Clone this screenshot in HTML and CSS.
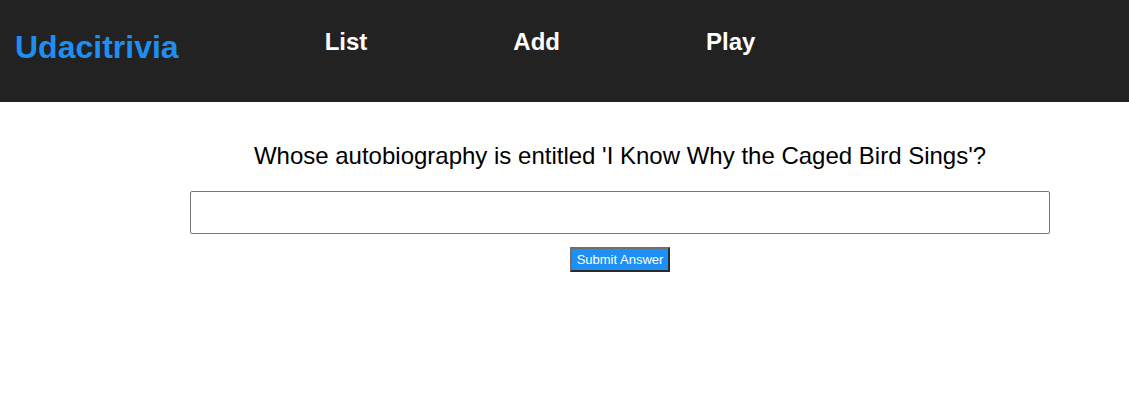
FILE: index.html
```html
<!DOCTYPE html>
<html>
<head>
<meta charset="utf-8">
<link rel="stylesheet" href="styles.css">
</head>
<body>
<header class="app-header">
  <h1 class="logo">Udacitrivia</h1>
  <h2 class="nav-item">List</h2>
  <h2 class="nav-item">Add</h2>
  <h2 class="nav-item">Play</h2>
</header>
<main class="quiz">
  <div class="question">Whose autobiography is entitled 'I Know Why the Caged Bird Sings'?</div>
  <form class="answer-form">
    <input class="answer-input" type="text">
    <input class="submit-btn" type="button" value="Submit Answer">
  </form>
</main>
</body>
</html>
```

FILE: styles.css
```css
html, body {
  margin: 0;
  padding: 0;
  background: #ffffff;
  font-family: "Liberation Sans", Arial, sans-serif;
}

.app-header {
  display: flex;
  align-items: flex-start;
  gap: 146px;
  height: 102px;
  padding-left: 15px;
  background: #222222;
  box-sizing: border-box;
}

.logo {
  margin: 29px 0 0 0;
  font-size: 32px;
  line-height: 37px;
  font-weight: bold;
  color: #1f8ef1;
}

.nav-item {
  margin: 28px 0 0 0;
  font-size: 24px;
  line-height: 28px;
  font-weight: bold;
  color: #ffffff;
}

.quiz {
  display: flex;
  flex-direction: column;
  align-items: center;
  margin-left: 190px;
  width: 860px;
  padding-top: 40px;
}

.question {
  font-size: 24px;
  line-height: 28px;
  color: #000000;
  text-align: center;
}

.answer-form {
  display: flex;
  flex-direction: column;
  align-items: center;
  width: 100%;
  margin-top: 21px;
}

.answer-input {
  box-sizing: border-box;
  width: 860px;
  height: 43px;
  margin: 0;
  border: 1px solid #767676;
  border-radius: 2px;
  background: #ffffff;
}

.submit-btn {
  box-sizing: border-box;
  width: 100px;
  height: 25px;
  margin: 13px 0 0 0;
  padding: 0 3px;
  font-family: "Liberation Sans", Arial, sans-serif;
  font-size: 13px;
  color: #ffffff;
  background: #1e8ff4;
  border-style: solid;
  border-width: 2px;
  border-color: #6f6f6f #2a2a2a #2a2a2a #6f6f6f;
  border-radius: 0;
}
```
